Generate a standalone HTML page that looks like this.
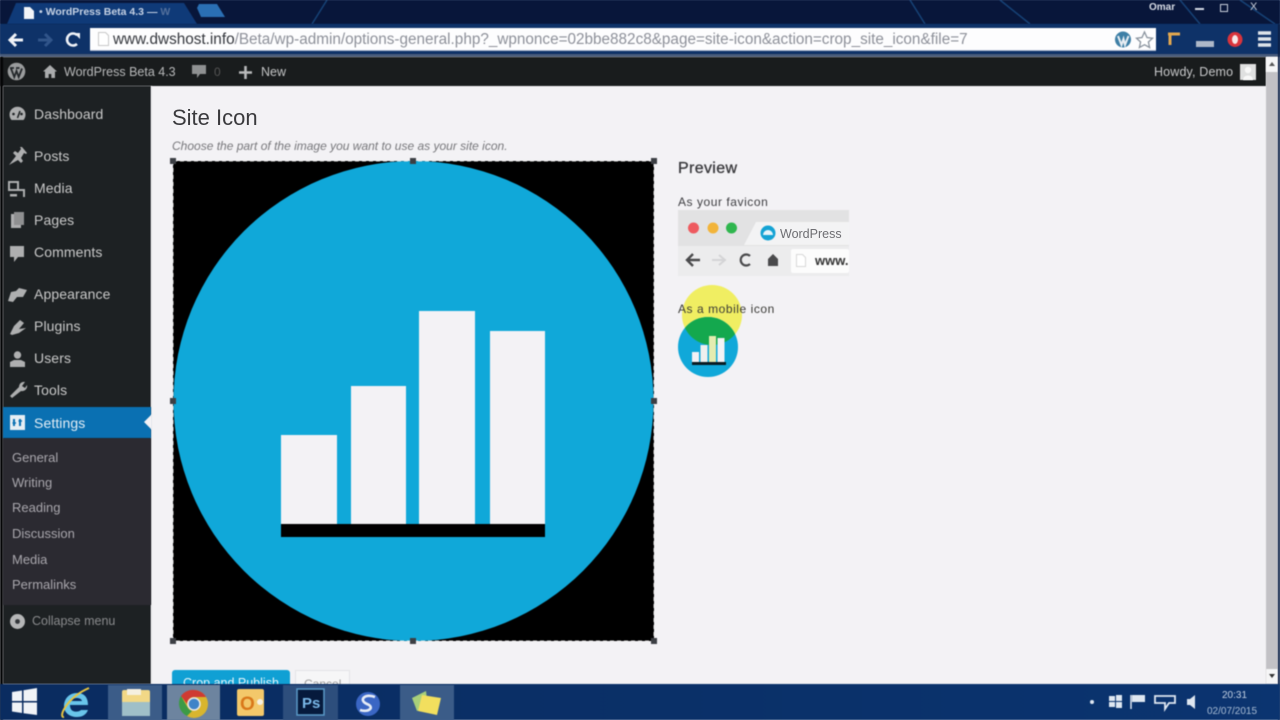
<!DOCTYPE html>
<html><head><meta charset="utf-8"><style>
html,body{margin:0;padding:0;width:1280px;height:720px;overflow:hidden;background:#f3f2f5}
body{position:relative;font-family:"Liberation Sans",sans-serif}
body>*{filter:blur(.4px)}
.a{position:absolute;white-space:nowrap}
.b{position:absolute}
.m{position:absolute;left:34px;font-size:14px;color:#c9c9c9;letter-spacing:.1px;line-height:18px;white-space:nowrap;filter:blur(.45px)}
.s{position:absolute;left:12px;font-size:13px;color:#a9a7ad;line-height:16px;white-space:nowrap;filter:blur(.45px)}
svg{position:absolute;overflow:visible}
</style></head><body>

<!-- window chrome -->
<div class="b" style="left:0;top:0;width:1280px;height:56px;background:linear-gradient(90deg,#0b2350 0,#0c2a5c 40%,#0a2350 70%,#0c2c60 100%)"></div>
<svg style="left:0;top:0" width="1280" height="28"><rect width="1280" height="24" fill="#08163a"/>
<path d="M312 24L327 0M1000 0L1030 24M910 0L925 24M1180 0L1200 24M1240 0L1275 24" stroke="#1d5590" stroke-width="1.5" opacity=".7"/>
<path d="M7 24L16 3H184L197 24Z" fill="#0f3a78"/><path d="M197 8L199 4H217L225 17H201Z" fill="#2a6fb4"/>
<path d="M24 7h6l4 4v8H24Z" fill="#f2f4f8"/></svg>
<div class="a" style="left:39px;top:6px;font-size:10.5px;color:#c6d2e4;font-weight:bold;filter:blur(.5px)">• WordPress Beta 4.3 — <span style="color:#54709c">W</span></div>
<div class="a" style="left:1149px;top:2px;font-size:10px;font-weight:bold;color:#d8dde6">Omar</div>
<div class="b" style="left:1195px;top:8px;width:9px;height:2px;background:#d5dce6"></div>
<div class="b" style="left:1220px;top:4px;width:6px;height:6px;border:1px solid #c8d0dc"></div>
<div class="a" style="left:1250px;top:1px;font-size:11px;color:#c8d0dc">X</div>

<!-- toolbar -->
<div class="b" style="left:0;top:24px;width:1280px;height:30px;background:#0e3268"></div>
<div class="b" style="left:0;top:54px;width:1280px;height:3px;background:#4a5d7c"></div>
<svg style="left:0;top:24px" width="90" height="30"><path d="M10 16H23M16 10L10 16L16 22" stroke="#f0f3f8" stroke-width="3" fill="none"/><path d="M38 16H51M45 10L51 16L45 22" stroke="#31558a" stroke-width="3" fill="none"/><path d="M77 11A6 6 0 1 0 77 20" stroke="#f0f3f8" stroke-width="2.6" fill="none"/><path d="M74 9h6v6Z" fill="#f0f3f8"/></svg>
<div class="b" style="left:90px;top:28px;width:1066px;height:23px;background:#fdfdfe;overflow:hidden;border-bottom:1px solid #aab6cc;box-sizing:border-box">
<svg style="left:8px;top:4px" width="11" height="14"><path d="M.5.5h7l3 3v10H.5Z" fill="#fff" stroke="#c8c8c8"/></svg>
<span class="a" style="left:23px;top:3px;font-size:15.3px;color:#8d9099;filter:blur(.35px)"><span style="color:#33363c">www.dwshost.info</span>/Beta/wp-admin/options-general.php?_wpnonce=02bbe882c8&amp;page=site-icon&amp;action=crop_site_icon&amp;file=7</span>
</div>
<svg style="left:1114px;top:30px" width="20" height="20"><circle cx="9" cy="9.5" r="8" fill="#3e7fa6"/><path d="M4 6L7.5 15L9.5 9L11 15L14.5 6" stroke="#e8eef3" stroke-width="2" fill="none"/></svg>
<svg style="left:1135px;top:30px" width="20" height="20"><path d="M9.5 2L12 7.5L17.5 8.2L13.4 12L14.6 17.5L9.5 14.7L4.4 17.5L5.6 12L1.5 8.2L7 7.5Z" fill="#fff" stroke="#8a939e" stroke-width="1.3"/></svg>
<svg style="left:1165px;top:30px" width="115" height="22"><path d="M3 4H15M5 4V15" stroke="#e2a850" stroke-width="3" fill="none"/><rect x="31" y="11" width="18" height="6" fill="#aeb8c8"/><circle cx="70" cy="9.5" r="7.5" fill="#d9343c"/><ellipse cx="70" cy="9.5" rx="3" ry="4.5" fill="#f6e8e8"/><path d="M93 3h13M93 9h13M93 15h13" stroke="#dfe3ea" stroke-width="3.5"/></svg>

<!-- admin bar -->
<div class="b" style="left:0;top:57px;width:1266px;height:29px;background:#191c1d"></div>
<div class="b" style="left:0;top:57px;width:3px;height:663px;background:#050607"></div>
<svg style="left:7px;top:62px" width="20" height="20"><circle cx="9.5" cy="9.5" r="8.8" fill="#9a9c9d"/><path d="M4 6.5L7.3 15L9.5 9L11.7 15L15 6.5M3 6H7M9 6H12.5" stroke="#23272a" stroke-width="1.8" fill="none"/></svg>
<svg style="left:43px;top:65px" width="14" height="14"><path d="M7 0L14 6.5H12V13H8.3V9H5.7V13H2V6.5H0Z" fill="#aaacad"/></svg>
<div class="a" style="left:64px;top:65px;font-size:12.5px;color:#b9babb;filter:blur(.45px)">WordPress Beta 4.3</div>
<svg style="left:192px;top:65px" width="14" height="15"><path d="M0 0H14V9H8L5 13V9H0Z" fill="#8f9192"/></svg>
<div class="a" style="left:214px;top:65px;font-size:12px;color:#555">0</div>
<svg style="left:239px;top:66px" width="13" height="13"><path d="M6.5 0V13M0 6.5H13" stroke="#b9babb" stroke-width="2.6"/></svg>
<div class="a" style="left:261px;top:65px;font-size:12.5px;color:#c4c5c6;filter:blur(.45px)">New</div>
<div class="a" style="left:1154px;top:65px;font-size:12.5px;letter-spacing:.15px;color:#c8c9ca;filter:blur(.4px)">Howdy, Demo</div>
<div class="b" style="left:1240px;top:64px;width:16px;height:16px;background:#dfe0e0"></div>
<svg style="left:1240px;top:64px" width="16" height="16"><circle cx="8" cy="6" r="3.2" fill="#f8f8f8"/><path d="M3 16C3 10 13 10 13 16Z" fill="#f8f8f8"/></svg>

<!-- sidebar -->
<div class="b" style="left:3px;top:86px;width:148px;height:598px;background:#1d2123"></div>
<div class="b" style="left:151px;top:86px;width:1px;height:598px;background:#e8e8ea"></div>
<div class="b" style="left:3px;top:438px;width:148px;height:167px;background:#2b2a31"></div>
<div class="b" style="left:3px;top:407px;width:148px;height:31px;background:#0a70b2"></div>
<svg style="left:143px;top:414px" width="9" height="16"><path d="M9 0V16L1 8Z" fill="#f3f2f5"/></svg>

<div class="m" style="top:105px">Dashboard</div>
<div class="m" style="top:147px">Posts</div>
<div class="m" style="top:179px">Media</div>
<div class="m" style="top:211px">Pages</div>
<div class="m" style="top:243px">Comments</div>
<div class="m" style="top:285px">Appearance</div>
<div class="m" style="top:317px">Plugins</div>
<div class="m" style="top:349px">Users</div>
<div class="m" style="top:381px">Tools</div>
<div class="m" style="top:414px;color:#e4eef6">Settings</div>
<div class="s" style="top:450px">General</div>
<div class="s" style="top:475px">Writing</div>
<div class="s" style="top:500px">Reading</div>
<div class="s" style="top:526px">Discussion</div>
<div class="s" style="top:552px">Media</div>
<div class="s" style="top:577px">Permalinks</div>
<svg style="left:9px;top:613px" width="17" height="17"><circle cx="8.5" cy="8.5" r="7.5" fill="#b5b6b7"/><circle cx="8.5" cy="8.5" r="2.4" fill="#33363a"/></svg>
<div class="a" style="left:32px;top:614px;font-size:12.5px;color:#8a8b8d;filter:blur(.5px)">Collapse menu</div>

<svg style="left:0;top:100px" width="32" height="340" fill="#aeafb0">
<path d="M11.500 20A8 8 0 1 1 23.500 20Z"/><circle cx="13.500" cy="14" r="1.300" fill="#1d2123"/><circle cx="21.500" cy="14" r="1.300" fill="#1d2123"/><path d="M17.500 18L20 11" stroke="#1d2123" stroke-width="1.500"/>
<path d="M9 65L16 56L13 53L15 51L18 53L21 49L20 47L22 47L27 53L26 54L24 53L21 58L23 61L21 63L18 60Z"/>
<path d="M9 82h9v8H9Z" fill="none" stroke="#aeafb0" stroke-width="2"/><path d="M19 89h6v8h-2v-6h-4Z"/><path d="M10 94h7v2.500h-7Z"/>
<path d="M11 114h10v14H11Z"/><path d="M14 112h10v13H14Z" fill="#8f9091"/>
<path d="M10 146H24V157H18L14 162V157H10Z"/>
<path d="M8 201L11 192L16 191L19 188L27 190L23 197L17 197L13 202Z"/>
<path d="M10 234L14 226L20 220L24 223L19 229L26 228L19 233L12 235Z"/>
<circle cx="17.500" cy="255" r="3.700"/><path d="M10 267V262L14 260H21L25 262V267Z"/>
<path d="M10 296L19 287A5 5 0 0 1 25 282L22 286L25 288L27 285A5 5 0 0 1 21 291L12 298Z"/>
</svg>
<div class="b" style="left:10px;top:415px;width:15px;height:15px;background:#e6eef4"></div>
<svg style="left:10px;top:415px" width="15" height="15"><path d="M4 4V11M10 4V11" stroke="#0a70b2" stroke-width="2"/><path d="M2.5 8H6M8.5 6H12" stroke="#0a70b2" stroke-width="1.6"/></svg>

<!-- content -->
<div class="a" style="left:172px;top:105px;font-size:22px;color:#3a3a3d;filter:blur(.3px)">Site Icon</div>
<div class="a" style="left:172px;top:139px;font-size:12px;font-style:italic;color:#77777b;filter:blur(.4px)">Choose the part of the image you want to use as your site icon.</div>

<svg style="left:168px;top:156px" width="492" height="492">
<rect x="5" y="5" width="481" height="480" fill="#000"/>
<circle cx="245.500" cy="245" r="240" fill="#10a8d9"/>
<rect x="113" y="279" width="56" height="90" fill="#f3f2f5"/>
<rect x="183" y="230" width="55" height="139" fill="#f3f2f5"/>
<rect x="251" y="155" width="56" height="214" fill="#f3f2f5"/>
<rect x="322" y="175" width="55" height="194" fill="#f3f2f5"/>
<rect x="113" y="368" width="264" height="13" fill="#000"/>
<rect x="5" y="5" width="481" height="480" fill="none" stroke="#e6e6e6" stroke-width="1" stroke-dasharray="4 3"/>
<g fill="#3c3f44"><rect x="2" y="2" width="6" height="6"/><rect x="242" y="2" width="6" height="6"/><rect x="483" y="2" width="6" height="6"/><rect x="2" y="242" width="6" height="6"/><rect x="483" y="242" width="6" height="6"/><rect x="2" y="482" width="6" height="6"/><rect x="242" y="482" width="6" height="6"/><rect x="483" y="482" width="6" height="6"/></g>
</svg>

<div class="b" style="left:172px;top:670px;width:118px;height:20px;background:#10a0d4;border-radius:3px 3px 0 0"></div>
<div class="a" style="left:183px;top:676px;font-size:12.5px;color:#e8f6fb;filter:blur(.5px)">Crop and Publish</div>
<div class="b" style="left:295px;top:670px;width:55px;height:20px;background:#f6f6f7;border:1px solid #e4e4e6;box-sizing:border-box"></div>
<div class="a" style="left:304px;top:677px;font-size:12px;color:#999">Cancel</div>

<!-- preview -->
<div class="a" style="left:678px;top:160px;font-size:16px;color:#38383b;letter-spacing:.35px;-webkit-text-stroke:.3px #38383b;filter:blur(.4px)">Preview</div>
<div class="a" style="left:678px;top:195px;font-size:12px;color:#3e3e42;letter-spacing:.55px;filter:blur(.4px)">As your favicon</div>
<svg style="left:678px;top:210px" width="171" height="67">
<rect width="171" height="66" fill="#e2e2e3"/><rect y="36" width="171" height="30" fill="#ececed"/>
<path d="M66 35L78 12H171V35Z" fill="#f3f3f4"/>
<circle cx="15.500" cy="18" r="5.500" fill="#ee5a5f"/><circle cx="35" cy="18" r="5.500" fill="#f2b43a"/><circle cx="53.500" cy="18" r="5.500" fill="#2fb64e"/>
<circle cx="90" cy="23" r="7.500" fill="#14a3d4"/><path d="M85 25a5 5 0 0 1 10 0Z" fill="#e6f4fa"/>
<path d="M9 50H22M15 44L9 50L15 56" stroke="#4a4a4c" stroke-width="2.4" fill="none"/><path d="M34 50H47M41 45L47 50L41 55" stroke="#d4d4d6" stroke-width="2" fill="none"/>
<path d="M72 46A5.500 5.500 0 1 0 72 54" stroke="#4a4a4c" stroke-width="2.2" fill="none"/><path d="M95 44L100 49V56H90V49Z" fill="#4a4a4c"/>
<rect x="113" y="39" width="58" height="24" rx="2" fill="#fcfcfc"/><path d="M118.500 44.500h6l3 3v9h-9Z" fill="#fff" stroke="#d8d8d8"/>
</svg>
<div class="a" style="left:780px;top:227px;font-size:12.5px;color:#6e6e72;filter:blur(.3px)">WordPress</div>
<div class="b" style="left:791px;top:249px;width:58px;height:24px;overflow:hidden"><span class="a" style="left:24px;top:4px;font-size:13px;font-weight:bold;color:#333">www.</span></div>

<svg style="left:675px;top:280px" width="70" height="100">
<defs><clipPath id="y"><circle cx="37" cy="35" r="30"/></clipPath></defs>
<circle cx="37" cy="35" r="30" fill="#f0ee62"/>
<circle cx="33" cy="67" r="30" fill="#10a8d9"/>
<circle cx="33" cy="67" r="30" fill="#14a84e" clip-path="url(#y)"/>
<rect x="17" y="72" width="7" height="10" fill="#f3f2f5"/><rect x="25.500" y="65" width="7" height="17" fill="#eef0ee"/><rect x="34" y="56" width="7" height="26" fill="#e4ecb0"/><rect x="42.500" y="58" width="7" height="24" fill="#f3f2f5"/><rect x="17" y="82" width="34" height="3" fill="#0a1b22"/>
</svg>
<div class="a" style="left:678px;top:302px;font-size:12px;color:#3a3a36;letter-spacing:.55px;filter:blur(.4px)">As a mobile icon</div>

<!-- scrollbar -->
<div class="b" style="left:1266px;top:57px;width:12px;height:627px;background:#c2c1c5"></div>
<div class="b" style="left:1266px;top:57px;width:12px;height:15px;background:#f5f5f6"></div>
<div class="b" style="left:1266px;top:669px;width:12px;height:15px;background:#f5f5f6"></div>
<svg style="left:1268px;top:61px" width="8" height="6"><path d="M4 1L7 5H1Z" fill="#555"/></svg>
<svg style="left:1268px;top:673px" width="8" height="6"><path d="M4 5L7 1H1Z" fill="#333"/></svg>
<div class="b" style="left:1278px;top:24px;width:2px;height:696px;background:#0b1f45"></div>

<!-- taskbar -->
<div class="b" style="left:0;top:684px;width:1280px;height:36px;background:linear-gradient(90deg,#0a2c60,#0a3068 50%,#0b3470)"></div>
<div class="b" style="left:108px;top:685px;width:54px;height:35px;background:#3b5c88"></div>
<div class="b" style="left:167px;top:685px;width:53px;height:35px;background:#6d849f"></div>
<div class="b" style="left:283px;top:685px;width:55px;height:35px;background:#2d4e7c"></div>
<div class="b" style="left:400px;top:685px;width:54px;height:35px;background:#3b5c88"></div>
<svg style="left:0;top:684px" width="460" height="36">
<path d="M12 8L22 6.500V17H12ZM23.500 6.300L37 4V17H23.500ZM12 18.500H22V29L12 27.500ZM23.500 18.500H37V31L23.500 29.300Z" fill="#f0f3f7"/>
<path d="M66 21H88C88 12 83 9 77 9C69 9 64 15 64 22C64 29 70 33 77 33C82 33 86 31 88 26H81C79 28 75 28 73 27C71 26 70 24 70 21Z M71 17H82C81 13 73 13 71 17Z" fill="#69c5ea" fill-rule="evenodd"/><path d="M64 33C58 34 66 14 89 4" stroke="#e8c440" stroke-width="2" fill="none"/>
<rect x="122" y="6" width="28" height="26" rx="2" fill="#f2d886"/><rect x="122" y="18" width="28" height="14" fill="#9fbfc8"/><rect x="127" y="5" width="14" height="6" fill="#f5f0e0"/>
<circle cx="194" cy="20" r="14" fill="#d8b52e"/><path d="M194 6A14 14 0 0 1 206 13H194A7 7 0 0 0 187 20L181 12A14 14 0 0 1 194 6Z" fill="#cf3b32"/><path d="M181 12L188 24A7 7 0 0 0 192 27L187 32A14 14 0 0 1 181 12Z" fill="#3c9a46"/><circle cx="194" cy="20" r="6" fill="#3f83c8" stroke="#e8e8e8" stroke-width="1.500"/>
<rect x="237" y="5" width="27" height="27" rx="2" fill="#f3c86a"/><text x="240" y="26" font-family="Liberation Sans" font-size="19" font-weight="bold" fill="#d9781a">O</text><circle cx="260" cy="18" r="3" fill="#f6f0e2"/>
<rect x="297" y="5" width="27" height="26" fill="#061a3c" stroke="#5a9ac8" stroke-width="1.500"/><text x="302" y="24" font-family="Liberation Sans" font-size="15" font-weight="bold" fill="#7ab8e8">Ps</text>
<circle cx="368" cy="20" r="12" fill="#3a66c4"/><path d="M375 13C365 9 358 16 367 20C375 23 369 29 360 26" stroke="#e6ecf6" stroke-width="2.600" fill="none"/>
<path d="M412 14L426 7L428 24L417 27Z" fill="#a8cf7a"/><path d="M422 11L441 14L437 31L418 27Z" fill="#f2df5e"/>
</svg>
<svg style="left:1085px;top:684px" width="115" height="36" fill="#dfe7f1">
<circle cx="7" cy="18" r="2"/><path d="M24 12h6v5h-6ZM31 11h6v6h-6ZM24 18h6v5h-6ZM31 18h6v6h-6Z"/><path d="M46 11V25" stroke="#dfe7f1" stroke-width="1.500"/><path d="M47 11H60V18H47Z"/>
<path d="M70 12H90V19H84L80 25V19H70Z" fill="none" stroke="#dfe7f1" stroke-width="1.800"/><path d="M102 15H105L110 11V25L105 21H102Z"/>
</svg>
<div class="a" style="left:1222px;top:690px;font-size:10px;color:#c4d2e4">20:31</div>
<div class="a" style="left:1207px;top:706px;font-size:10px;color:#a8bcd4">02/07/2015</div>
</body></html>
